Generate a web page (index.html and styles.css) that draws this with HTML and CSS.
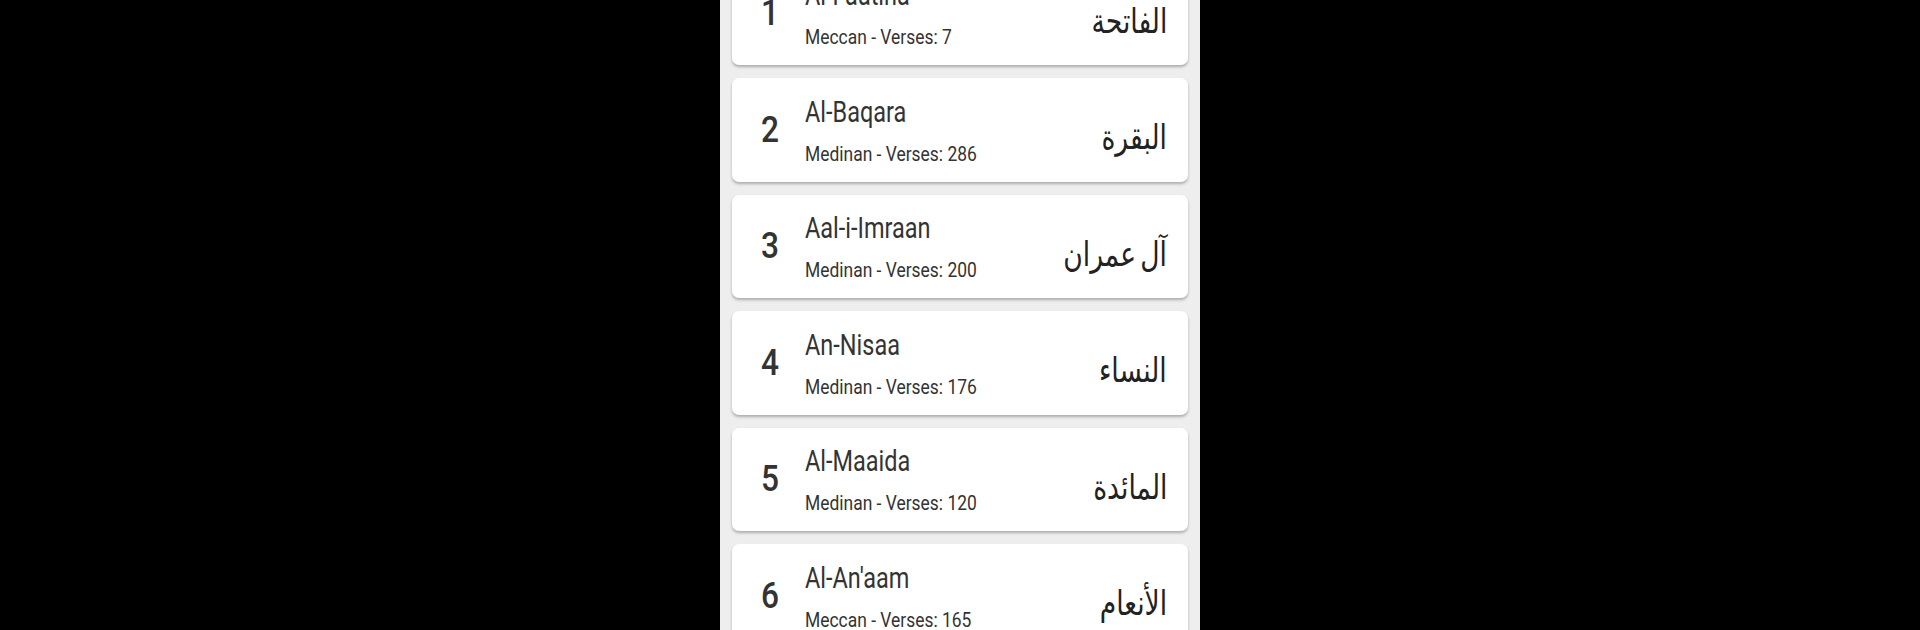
FILE: index.html
```html
<!DOCTYPE html>
<html lang="en">
<head>
    <meta charset="UTF-8">
    <meta name="viewport" content="width=device-width, initial-scale=1.0">
    <title>Surah list</title>
    <link rel="stylesheet" href="styles.css">
</head>
<body>
    <div class="screen">
        <div class="list">
            <div class="card">
                <div class="number">1</div>
                <div class="info">
                    <div class="name">Al-Faatiha</div>
                    <div class="meta">Meccan - Verses: 7</div>
                </div>
                <div class="arabic" lang="ar" dir="rtl">الفاتحة</div>
            </div>
            <div class="card">
                <div class="number">2</div>
                <div class="info">
                    <div class="name">Al-Baqara</div>
                    <div class="meta">Medinan - Verses: 286</div>
                </div>
                <div class="arabic" lang="ar" dir="rtl">البقرة</div>
            </div>
            <div class="card">
                <div class="number">3</div>
                <div class="info">
                    <div class="name">Aal-i-Imraan</div>
                    <div class="meta">Medinan - Verses: 200</div>
                </div>
                <div class="arabic" lang="ar" dir="rtl">آل عمران</div>
            </div>
            <div class="card">
                <div class="number">4</div>
                <div class="info">
                    <div class="name">An-Nisaa</div>
                    <div class="meta">Medinan - Verses: 176</div>
                </div>
                <div class="arabic" lang="ar" dir="rtl">النساء</div>
            </div>
            <div class="card">
                <div class="number">5</div>
                <div class="info">
                    <div class="name">Al-Maaida</div>
                    <div class="meta">Medinan - Verses: 120</div>
                </div>
                <div class="arabic" lang="ar" dir="rtl">المائدة</div>
            </div>
            <div class="card">
                <div class="number">6</div>
                <div class="info">
                    <div class="name">Al-An'aam</div>
                    <div class="meta">Meccan - Verses: 165</div>
                </div>
                <div class="arabic" lang="ar" dir="rtl">الأنعام</div>
            </div>
        </div>
    </div>
</body>
</html>
```

FILE: styles.css
```css
* {
    box-sizing: border-box;
}

html, body {
    height: 100%;
    margin: 0;
    overflow: hidden;
    background-color: #000;
}

body {
    display: flex;
    justify-content: center;
    font-family: Roboto, sans-serif;
    color: #333;
}

.screen {
    width: 480px;
    height: 630px;
    overflow: hidden;
    background-color: #eee;
}

.list {
    display: flex;
    flex-direction: column;
    gap: 13px;
    margin: -38.5px 12px 0;
}

.card {
    display: flex;
    align-items: center;
    flex: none;
    height: 103.5px;
    padding: 0 21px 0 20px;
    background-color: #fff;
    border-radius: 7px;
    box-shadow: 0 2px 3px rgba(0, 0, 0, 0.28);
}

.number {
    width: 36px;
    margin-right: 17px;
    text-align: center;
    font-size: 36px;
    font-weight: 500;
    transform: scaleX(0.88);
}

.info {
    flex: 1;
    min-width: 0;
    margin-top: 1px;
}

.name, .meta {
    white-space: nowrap;
    transform-origin: left;
}

.name {
    font-size: 29px;
    line-height: 36px;
    margin-bottom: 11px;
    transform: scaleX(0.81);
}

.meta {
    font-size: 21px;
    line-height: 26px;
    transform: scaleX(0.83);
}

.arabic {
    flex: none;
    margin-top: 15px;
    font-family: "DejaVu Sans", sans-serif;
    font-size: 32px;
    line-height: 44px;
    word-spacing: -5px;
    color: #222;
    transform: scale(0.83, 1.08);
    transform-origin: right;
}
```
